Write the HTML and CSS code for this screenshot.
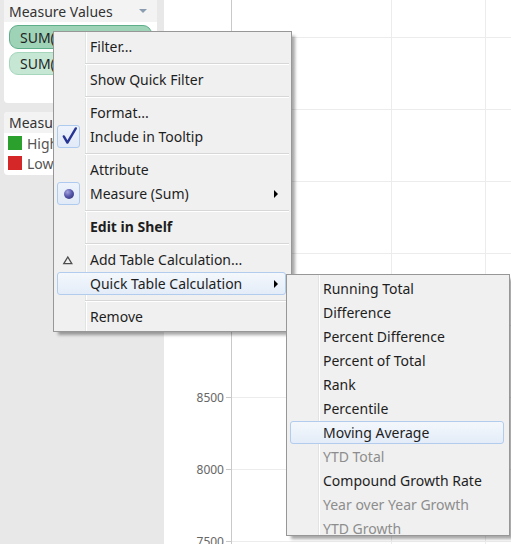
FILE: index.html
```html
<!DOCTYPE html>
<html lang="en">
<head>
<meta charset="utf-8">
<title>Quick Table Calculation</title>
<link rel="stylesheet" href="styles.css">
</head>
<body>
<div class="app">
  <aside class="side">
    <section class="card values">
      <div class="card-head"><span>Measure Values</span><span class="caret"></span></div>
      <div class="pills">
        <div class="pill pill-a">SUM(High)</div>
        <div class="pill pill-b">SUM(Low)</div>
      </div>
    </section>
    <section class="card legend">
      <div class="card-head">Measure Names</div>
      <div class="leg-row"><span class="sw sw-g"></span>High</div>
      <div class="leg-row"><span class="sw sw-r"></span>Low</div>
    </section>
  </aside>

  <main class="plot">
    <svg class="grid" width="347" height="544" viewBox="0 0 347 544">
      <g stroke="#ececec" stroke-width="1" shape-rendering="crispEdges">
        <line x1="68" y1="37.5" x2="347" y2="37.5"/>
        <line x1="68" y1="109.5" x2="347" y2="109.5"/>
        <line x1="68" y1="181.5" x2="347" y2="181.5"/>
        <line x1="68" y1="253.5" x2="347" y2="253.5"/>
        <line x1="68" y1="325.5" x2="347" y2="325.5"/>
        <line x1="68" y1="397.5" x2="347" y2="397.5"/>
        <line x1="68" y1="469.5" x2="347" y2="469.5"/>
        <line x1="68" y1="541.5" x2="347" y2="541.5"/>
        <line x1="227.5" y1="0" x2="227.5" y2="544"/>
        <line x1="321.5" y1="0" x2="321.5" y2="544"/>
      </g>
      <g stroke="#c9c9c9" stroke-width="1" shape-rendering="crispEdges">
        <line x1="67.5" y1="0" x2="67.5" y2="544"/>
        <line x1="62" y1="37.5" x2="67" y2="37.5"/>
        <line x1="62" y1="109.5" x2="67" y2="109.5"/>
        <line x1="62" y1="181.5" x2="67" y2="181.5"/>
        <line x1="62" y1="253.5" x2="67" y2="253.5"/>
        <line x1="62" y1="325.5" x2="67" y2="325.5"/>
        <line x1="62" y1="397.5" x2="67" y2="397.5"/>
        <line x1="62" y1="469.5" x2="67" y2="469.5"/>
        <line x1="62" y1="541.5" x2="67" y2="541.5"/>
      </g>
      <g class="ticks" text-anchor="end">
        <text x="60" y="402">8500</text>
        <text x="60" y="474">8000</text>
        <text x="60" y="546">7500</text>
      </g>
    </svg>
  </main>

  <div class="menu main-menu">
    <div class="mi"><span class="lbl">Filter...</span></div>
    <div class="sep"></div>
    <div class="mi"><span class="lbl">Show Quick Filter</span></div>
    <div class="sep"></div>
    <div class="mi"><span class="lbl">Format...</span></div>
    <div class="mi"><span class="ico on"><svg width="21" height="21" viewBox="0 0 21 21"><path d="M5.8 10.4 L9.4 16.6 L17.8 2.4" fill="none" stroke="#283594" stroke-width="2.4" stroke-linecap="round" stroke-linejoin="round"/></svg></span><span class="lbl">Include in Tooltip</span></div>
    <div class="sep"></div>
    <div class="mi"><span class="lbl">Attribute</span></div>
    <div class="mi"><span class="ico on"><span class="dot"></span></span><span class="lbl">Measure (Sum)</span><span class="arr"></span></div>
    <div class="sep"></div>
    <div class="mi"><span class="lbl strong">Edit in Shelf</span></div>
    <div class="sep"></div>
    <div class="mi"><span class="ico"><svg width="23" height="23" viewBox="0 0 23 23"><path d="M6.8 15.6 L10.8 9 L14.8 15.6 Z" fill="none" stroke="#4d4d4d" stroke-width="1.3" stroke-linejoin="miter"/></svg></span><span class="lbl">Add Table Calculation...</span></div>
    <div class="mi hl"><span class="lbl">Quick Table Calculation</span><span class="arr"></span></div>
    <div class="sep"></div>
    <div class="mi"><span class="lbl">Remove</span></div>
  </div>

  <div class="menu sub-menu">
    <div class="mi"><span class="lbl">Running Total</span></div>
    <div class="mi"><span class="lbl">Difference</span></div>
    <div class="mi"><span class="lbl">Percent Difference</span></div>
    <div class="mi"><span class="lbl">Percent of Total</span></div>
    <div class="mi"><span class="lbl">Rank</span></div>
    <div class="mi"><span class="lbl">Percentile</span></div>
    <div class="mi hl"><span class="lbl">Moving Average</span></div>
    <div class="mi off"><span class="lbl">YTD Total</span></div>
    <div class="mi"><span class="lbl">Compound Growth Rate</span></div>
    <div class="mi off"><span class="lbl">Year over Year Growth</span></div>
    <div class="mi off"><span class="lbl">YTD Growth</span></div>
  </div>
</div>
</body>
</html>
```

FILE: styles.css
```css
html, body {
  margin: 0;
  padding: 0;
}

body {
  width: 511px;
  height: 544px;
  overflow: hidden;
  font-family: "Noto Sans", "Open Sans", sans-serif;
  font-size: 14px;
  color: #1e1e1e;
  background: #fff;
}

.app {
  position: relative;
  display: flex;
  width: 511px;
  height: 544px;
}

/* ---------- left shelf panel ---------- */
.side {
  width: 164px;
  flex: none;
  box-sizing: border-box;
  padding: 0 7px 0 4px;
  background: #e8e8e8;
  display: flex;
  flex-direction: column;
  gap: 9px;
}

.card {
  background: #fff;
  border-radius: 4px;
  overflow: hidden;
  flex: none;
}

.card-head {
  display: flex;
  align-items: center;
  background: #f3f3f3;
  color: #333;
  padding: 0 5px;
  white-space: nowrap;
}

.values {
  margin-top: -3px;
  height: 106px;
}

.values .card-head {
  height: 22px;
  padding-top: 3px;
}

.caret {
  margin-left: auto;
  margin-right: 5px;
  width: 0;
  height: 0;
  border-left: 4px solid transparent;
  border-right: 4px solid transparent;
  border-top: 4px solid #8b9bb0;
}

.pills {
  display: flex;
  flex-direction: column;
  gap: 3px;
  padding: 3px 5px 0 5px;
}

.pill {
  height: 24px;
  box-sizing: border-box;
  border: 1px solid;
  border-radius: 9px;
  padding-left: 10px;
  display: flex;
  align-items: center;
  color: #1f1f1f;
  white-space: nowrap;
}

.pill-a {
  background: #9fd3b8;
  border-color: #5fae8a;
}

.pill-b {
  height: 23px;
  background: #c5e7d4;
  border-color: #a6d6bc;
}

.legend {
  height: 63px;
  box-sizing: border-box;
  padding-bottom: 2px;
}

.legend .card-head {
  height: 21px;
}

.leg-row {
  height: 20px;
  display: flex;
  align-items: center;
  padding-left: 4px;
  color: #555;
  white-space: nowrap;
}

.sw {
  width: 14px;
  height: 14px;
  margin-right: 5px;
  flex: none;
}

.sw-g { background: #2ca02c; }
.sw-r { background: #d62728; }

/* ---------- chart area ---------- */
.plot {
  flex: 1;
  background: #fff;
  overflow: hidden;
}

.grid {
  display: block;
}

.ticks {
  font-family: "Noto Sans", "Open Sans", sans-serif;
  font-size: 12px;
  fill: #666;
}

/* ---------- context menus ---------- */
.menu {
  position: absolute;
  box-sizing: border-box;
  display: flex;
  flex-direction: column;
  border: 1px solid #979797;
  background-color: #f0f0f0;
  background-image: linear-gradient(to right,
    transparent 31px, #e2e3e3 31px, #e2e3e3 32px,
    #ffffff 32px, #ffffff 33px, transparent 33px);
  box-shadow: 4px 4px 3px -1px rgba(0, 0, 0, 0.35);
  z-index: 2;
}

.main-menu {
  left: 53px;
  top: 31px;
  width: 239px;
  padding: 3px 5px 2px 3px;
}

.sub-menu {
  left: 286px;
  top: 274px;
  width: 224px;
  height: 262px;
  overflow: hidden;
  padding: 2px 5px 0 3px;
  z-index: 3;
}

.mi {
  display: flex;
  align-items: center;
  flex: none;
  height: 23px;
  margin-bottom: 1px;
  box-sizing: border-box;
  border: 1px solid transparent;
  border-radius: 3px;
  white-space: nowrap;
}

.mi.hl {
  background: linear-gradient(#f4f8fc, #e3ecf8);
  border-color: #b2ccee;
}

.mi.off {
  color: #8d8d8d;
}

.lbl {
  margin-left: 32px;
}

.ico {
  width: 23px;
  height: 23px;
  margin: -1px 10px -1px -1px;
  box-sizing: border-box;
  flex: none;
  display: flex;
  align-items: center;
  justify-content: center;
}

.ico + .lbl {
  margin-left: 0;
}

.ico.on {
  border: 1px solid #aecbef;
  border-radius: 3px;
  background: linear-gradient(#eef3fb, #e1eaf7);
}

.dot {
  width: 10px;
  height: 10px;
  border-radius: 50%;
  background: radial-gradient(circle at 35% 30%, #a4a4de 0%, #5a5aae 45%, #26266c 100%);
}

.strong {
  font-weight: 700;
}

.arr {
  margin-left: auto;
  margin-right: 7px;
  width: 0;
  height: 0;
  border-left: 4px solid #000;
  border-top: 4px solid transparent;
  border-bottom: 4px solid transparent;
}

.sep {
  flex: none;
  height: 1px;
  margin: 4px -3px 3px 28px;
  background: #d7d7d7;
  border-bottom: 1px solid #fff;
}
```
